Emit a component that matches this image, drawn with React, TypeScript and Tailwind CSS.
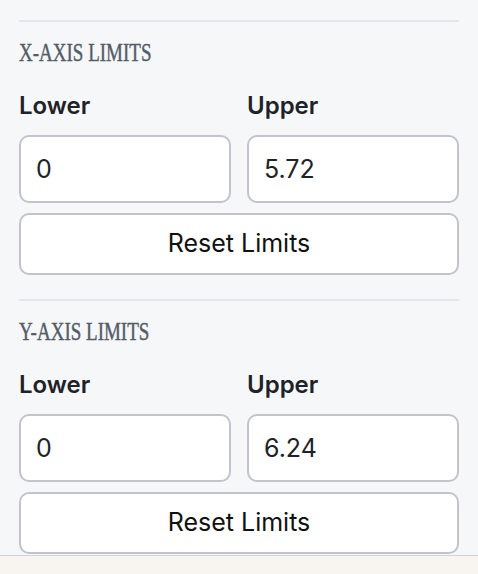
import React from "react";

type Axis = { title: string; lower: string; upper: string };

const axes: Axis[] = [
	{ title: "X-AXIS LIMITS", lower: "0", upper: "5.72" },
	{ title: "Y-AXIS LIMITS", lower: "0", upper: "6.24" },
];

function LimitField({ label, value }: { label: string; value: string }) {
	return (
		<div className="flex flex-col">
			<span className="text-[24px] leading-[28px] font-semibold text-[#1f2328]">
				{label}
			</span>
			<input
				readOnly
				value={value}
				className="mt-[15px] h-[68px] w-full rounded-[10px] border-2 border-[#c1c5cb] bg-white pl-[15px] text-[25px] text-[#1f2328] outline-none"
			/>
		</div>
	);
}

function AxisSection({ axis, first }: { axis: Axis; first: boolean }) {
	return (
		<section className={first ? "pt-[20px]" : "pt-[24px]"}>
			<div className="h-[2px] bg-[#e4e6ea]" />
			<h3 className="mt-[16px] h-[30px] text-[25px] leading-[30px] text-[#535c67] font-['Liberation_Serif',serif] [-webkit-text-stroke:0.4px_#535c67]">
				<span className="inline-block origin-left scale-x-[0.76] whitespace-nowrap">
					{axis.title}
				</span>
			</h3>
			<div className="mt-[24px] grid grid-cols-2 gap-[16px]">
				<LimitField label="Lower" value={axis.lower} />
				<LimitField label="Upper" value={axis.upper} />
			</div>
			<button className="mt-[10px] h-[62px] w-full rounded-[10px] border-2 border-[#c1c5cb] bg-white text-[25px] text-[#111111]">
				Reset Limits
			</button>
		</section>
	);
}

export default function App() {
	return (
		<div className="h-[574px] w-[478px] overflow-hidden bg-[#f8f5f0] font-['Inter',sans-serif]">
			<div className="h-[556px] overflow-hidden border-b border-[#cfd3d8] bg-[#f6f7f9] pl-[19px] pr-[19px]">
				{axes.map((axis, i) => (
					<AxisSection key={axis.title} axis={axis} first={i === 0} />
				))}
			</div>
		</div>
	);
}
